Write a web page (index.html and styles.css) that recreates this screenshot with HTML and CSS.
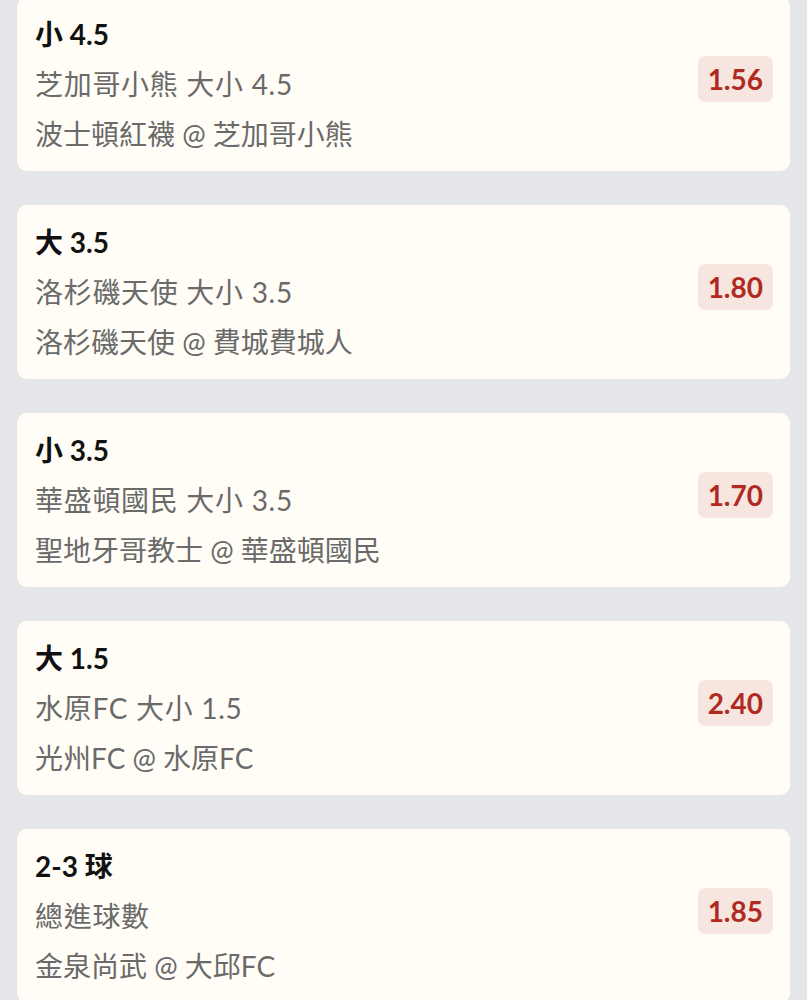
FILE: index.html
```html
<!DOCTYPE html>
<html lang="zh-Hant">
<head>
<meta charset="utf-8">
<link rel="stylesheet" href="styles.css">
</head>
<body>
<div class="list">
  <div class="card">
    <div class="info">
      <div class="title">小 4.5</div>
      <div class="sub market">芝加哥小熊 大小 4.5</div>
      <div class="sub">波士頓紅襪 @ 芝加哥小熊</div>
    </div>
    <div class="odds">1.56</div>
  </div>
  <div class="card">
    <div class="info">
      <div class="title">大 3.5</div>
      <div class="sub market">洛杉磯天使 大小 3.5</div>
      <div class="sub">洛杉磯天使 @ 費城費城人</div>
    </div>
    <div class="odds">1.80</div>
  </div>
  <div class="card">
    <div class="info">
      <div class="title">小 3.5</div>
      <div class="sub market">華盛頓國民 大小 3.5</div>
      <div class="sub">聖地牙哥教士 @ 華盛頓國民</div>
    </div>
    <div class="odds">1.70</div>
  </div>
  <div class="card">
    <div class="info">
      <div class="title">大 1.5</div>
      <div class="sub market">水原FC 大小 1.5</div>
      <div class="sub">光州FC @ 水原FC</div>
    </div>
    <div class="odds">2.40</div>
  </div>
  <div class="card">
    <div class="info">
      <div class="title">2-3 球</div>
      <div class="sub market">總進球數</div>
      <div class="sub">金泉尚武 @ 大邱FC</div>
    </div>
    <div class="odds">1.85</div>
  </div>
</div>
</body>
</html>
```

FILE: styles.css
```css
html, body {
  margin: 0;
  padding: 0;
  background: #e5e6ea;
}
body {
  font-family: Lato, "Noto Sans CJK TC", sans-serif;
  overflow: hidden;
}
.list {
  display: flex;
  flex-direction: column;
  gap: 34px;
  padding: 0 17px;
  margin-top: -3px;
}
.card {
  background: #fffdf6;
  border-radius: 10px;
  height: 174px;
  box-sizing: border-box;
  padding: 0 17px 0 18px;
  display: flex;
  align-items: center;
  justify-content: space-between;
}
.info {
  display: flex;
  flex-direction: column;
}
.title {
  font-family: Lato, "Noto Sans CJK TC", sans-serif;
  font-weight: 700;
  font-size: 28px;
  line-height: 50px;
  color: #111111;
}
.sub {
  font-family: Lato, "Noto Sans CJK TC", sans-serif;
  font-weight: 400;
  font-size: 28px;
  line-height: 50px;
  color: #6a6a6a;
}
.market {
  letter-spacing: 0.7px;
}
.odds {
  background: #f7e6df;
  color: #b02a22;
  font-family: Lato, sans-serif;
  font-weight: 700;
  font-size: 28px;
  line-height: 46px;
  padding: 0 10px;
  border-radius: 7px;
  margin-top: -10px;
}
```
